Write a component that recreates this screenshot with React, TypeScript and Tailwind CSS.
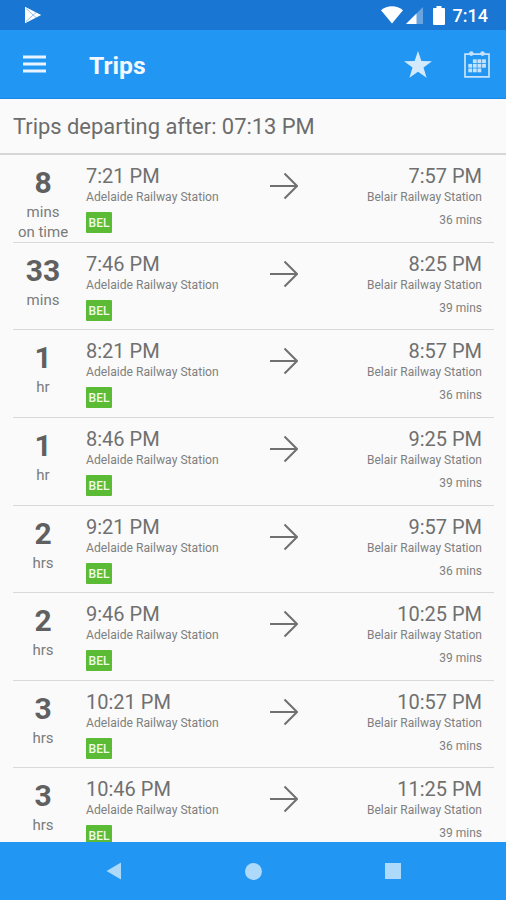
interface Trip {
  wait: string
  unit: string
  status?: string
  departs: string
  arrives: string
  duration: string
}

const TRIPS: Trip[] = [
  { wait: '8', unit: 'mins', status: 'on time', departs: '7:21 PM', arrives: '7:57 PM', duration: '36 mins' },
  { wait: '33', unit: 'mins', departs: '7:46 PM', arrives: '8:25 PM', duration: '39 mins' },
  { wait: '1', unit: 'hr', departs: '8:21 PM', arrives: '8:57 PM', duration: '36 mins' },
  { wait: '1', unit: 'hr', departs: '8:46 PM', arrives: '9:25 PM', duration: '39 mins' },
  { wait: '2', unit: 'hrs', departs: '9:21 PM', arrives: '9:57 PM', duration: '36 mins' },
  { wait: '2', unit: 'hrs', departs: '9:46 PM', arrives: '10:25 PM', duration: '39 mins' },
  { wait: '3', unit: 'hrs', departs: '10:21 PM', arrives: '10:57 PM', duration: '36 mins' },
  { wait: '3', unit: 'hrs', departs: '10:46 PM', arrives: '11:25 PM', duration: '39 mins' },
]

// Filled day cells of the calendar icon, as [column, row]
const CALENDAR_DAYS = [
  [1, 0], [2, 0], [3, 0],
  [0, 1], [1, 1], [2, 1], [3, 1],
  [0, 2], [1, 2], [2, 2],
]

function StatusBar() {
  return (
    <div className="flex h-[30px] shrink-0 items-center bg-[#1976d2] pr-[18px] pl-6 text-white">
      <svg width="18" height="18" viewBox="0 0 18 18">
        <path d="M1 .8 17.2 9 1 17.2Z" fill="#fff" />
        <path d="M2 2.5 12.5 12M2 15.5 12.5 6" stroke="#1976d2" strokeWidth=".9" opacity=".5" />
      </svg>
      <svg className="ml-auto" width="22" height="18" viewBox="0 0 22 18">
        <path d="M0 4.2C6-1 16-1 22 4.2L11 17.6Z" fill="#fff" />
      </svg>
      <svg className="ml-[3px] mt-px" width="17" height="17" viewBox="0 0 17 17">
        <path d="M17 0V17H0Z" fill="#fff" opacity=".35" />
        <path d="M10.5 6.5V17H0Z" fill="#fff" />
      </svg>
      <svg className="ml-2.5" width="12" height="19" viewBox="0 0 12 19">
        <path d="M3.5 0h5v2H11q1 0 1 1v15q0 1-1 1H1q-1 0-1-1V3q0-1 1-1h2.5Z" fill="#fff" />
      </svg>
      <span className="mt-0.5 ml-2 text-[18px] leading-none font-medium">7:14</span>
    </div>
  )
}

function AppBar() {
  return (
    <header className="flex h-[69px] shrink-0 items-center border-b border-[#1788e5] bg-[#2196f3] pr-4 pl-[23px]">
      <svg width="23" height="18" viewBox="0 0 23 18" fill="#e9f4fe">
        <path d="M0 .5h23v3H0zM0 7.5h23v3H0zM0 14.5h23v3H0z" />
      </svg>
      <h1 className="mt-[5px] ml-[43px] text-[24.7px] leading-none font-bold text-[#f2f8fe]">Trips</h1>
      <svg className="ml-auto" width="28" height="27" viewBox="0 0 28 27" fill="#d3eafd">
        <path d="M14 0 17.4 9.9 28 10.2 19.5 16.6 22.6 26.7 14 20.7 5.4 26.7 8.5 16.6 0 10.2 10.6 9.9Z" />
      </svg>
      <svg className="ml-8" width="26" height="27" viewBox="0 0 26 27" fill="#c5e3fc">
        <path d="M1 3.2H25V25.8H1Z" fill="none" stroke="#c5e3fc" strokeWidth="1.7" />
        <circle cx="7.3" cy="2.6" r="2.3" />
        <circle cx="18.5" cy="2.6" r="2.3" />
        {CALENDAR_DAYS.map(([col, row]) => (
          <rect key={`${col}-${row}`} x={4.3 + col * 4.6} y={8.3 + row * 4.6} width="3.8" height="3.8" />
        ))}
      </svg>
    </header>
  )
}

function TripRow({ trip }: { trip: Trip }) {
  return (
    <li className="mr-3 ml-[13px] flex h-[87.65px] shrink-0 border-b border-[#d9d9d9]">
      <div className="flex w-[60px] flex-col items-center pt-3 text-[15px] leading-[20px] text-[#7a7a7a]">
        <span className="text-[30px] leading-[32px] font-bold text-[#606060]">{trip.wait}</span>
        <span className="mt-[3px]">{trip.unit}</span>
        {trip.status && <span>{trip.status}</span>}
      </div>
      <div className="ml-[13px] flex flex-1 flex-col items-start pt-[9px]">
        <span className="text-[20px] leading-6 text-[#707070]">{trip.departs}</span>
        <span className="mt-px text-[12.15px] leading-4 text-[#7f7f7f]">Adelaide Railway Station</span>
        <span className="mt-[7px] flex h-[21px] w-[26px] items-center justify-center rounded-[1px] bg-[#5bbb35] pt-px text-[12px] font-medium text-[#effae9]">
          BEL
        </span>
      </div>
      <svg className="mt-[17px] shrink-0" width="28" height="28" viewBox="0 0 28 28" fill="none" stroke="#707070" strokeWidth="2">
        <path d="M0 14H27M14.5 1.5 27 14 14.5 26.5" />
      </svg>
      <div className="mr-3 flex w-[184px] flex-col items-end pt-[9px]">
        <span className="text-[20px] leading-6 text-[#707070]">{trip.arrives}</span>
        <span className="mt-px text-[12px] leading-4 text-[#7f7f7f]">Belair Railway Station</span>
        <span className="mt-[7px] text-[12px] leading-4 text-[#7f7f7f]">{trip.duration}</span>
      </div>
    </li>
  )
}

function NavigationBar() {
  return (
    <nav className="flex h-[58px] shrink-0 items-center justify-between bg-[#2196f3] pr-[105px] pl-[106px]">
      <svg width="16" height="18" viewBox="0 0 16 18" fill="#add9fb">
        <path d="M15 .5V17.5L.5 9Z" />
      </svg>
      <div className="size-[17px] rounded-full bg-[#add9fb]" />
      <div className="size-4 bg-[#add9fb]" />
    </nav>
  )
}

export default function App() {
  return (
    <div className="flex h-[900px] w-[506px] flex-col overflow-hidden bg-[#fafafa] font-[Roboto,sans-serif]">
      <StatusBar />
      <AppBar />
      <div className="flex h-14 shrink-0 items-center border-b-2 border-[#d6d6d6] pt-[3px] pl-[13px] text-[21.9px] text-[#6c6c6c]">
        Trips departing after: 07:13 PM
      </div>
      <ul className="flex min-h-0 flex-1 flex-col overflow-hidden">
        {TRIPS.map((trip) => (
          <TripRow key={trip.departs} trip={trip} />
        ))}
      </ul>
      <NavigationBar />
    </div>
  )
}
